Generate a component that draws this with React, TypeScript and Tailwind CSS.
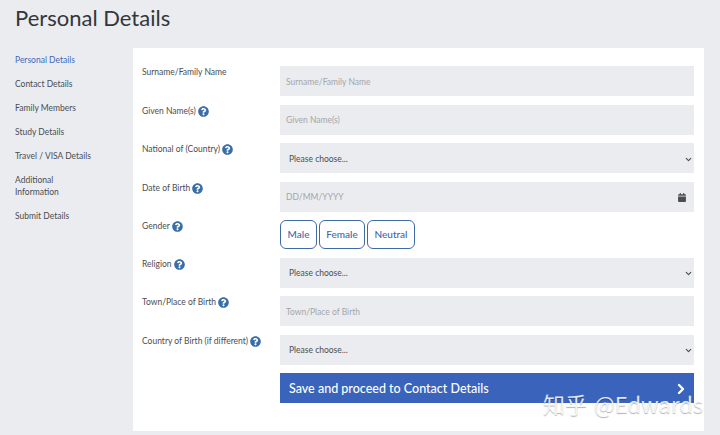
import { ChevronDown, ChevronRight } from "lucide-react";
import type { ReactNode } from "react";

const navItems = [
	"Contact Details",
	"Family Members",
	"Study Details",
	"Travel / VISA Details",
];

function Help() {
	return (
		<svg viewBox="0 0 512 512" className="ml-[2px] h-[11px] w-[11px] shrink-0" fill="#3a6ea8">
			<path d="M504 256c0 137-111 248-248 248S8 393 8 256 119 8 256 8s248 111 248 248zM262.700 90c-54.500 0-89.300 23-116.500 63.800-3.500 5.300-2.300 12.400 2.800 16.300l34.700 26.300c5.200 3.900 12.600 3 16.700-2.100 17.900-22.700 30.100-35.800 57.300-35.800 20.400 0 45.700 13.100 45.700 32.900 0 14.900-12.300 22.600-32.400 33.900-23.400 13.100-54.400 29.500-54.400 70.300V300c0 6.600 5.400 12 12 12h56c6.600 0 12-5.400 12-12v-1.300c0-28.300 82.700-29.500 82.700-106.100C379.300 135 319.500 90 262.700 90zM256 336c-25.200 0-45.800 20.500-45.800 45.800 0 25.200 20.500 45.800 45.800 45.800s45.800-20.500 45.800-45.800c0-25.200-20.500-45.800-45.800-45.800z" />
		</svg>
	);
}

function Row({
	label,
	help = true,
	height = "h-[38.500px]",
	children,
}: {
	label: string;
	help?: boolean;
	height?: string;
	children: ReactNode;
}) {
	return (
		<div className={`flex ${height}`}>
			<div className="flex h-[13px] w-[138px] shrink-0 items-center text-[8.500px] text-[#4a4d52]">
				{label}
				{help && <Help />}
			</div>
			<div className="flex-1">{children}</div>
		</div>
	);
}

function TextInput({ placeholder, icon }: { placeholder: string; icon?: boolean }) {
	return (
		<div className="flex h-[30px] items-center justify-between bg-[#ebecef] pl-[6px] pr-[8px] pt-[2px] text-[8.500px] text-[#a3a6ab]">
			{placeholder}
			{icon && (
				<svg viewBox="0 0 448 512" className="h-[9px] w-[8px]" fill="#4a4d52">
					<path d="M0 464c0 26.500 21.500 48 48 48h352c26.500 0 48-21.500 48-48V192H0v272zM400 64h-48V16c0-8.800-7.200-16-16-16h-32c-8.800 0-16 7.200-16 16v48H160V16c0-8.800-7.200-16-16-16h-32c-8.800 0-16 7.200-16 16v48H48C21.500 64 0 85.500 0 112v48h448v-48c0-26.500-21.500-48-48-48z" />
				</svg>
			)}
		</div>
	);
}

function SelectInput() {
	return (
		<div className="flex h-[30px] items-center justify-between bg-[#ebecef] pl-[9px] pr-[1px] pt-[2px] text-[8.500px] text-[#4a4d52]">
			Please choose...
			<ChevronDown size={9} strokeWidth={3} className="text-[#4a4d52]" />
		</div>
	);
}

function GenderButton({ label, width }: { label: string; width: string }) {
	return (
		<div
			className={`flex h-[29px] ${width} items-center justify-center rounded-[6px] border-[1.500px] border-[#3f6aa8] text-[10px] font-medium text-[#3f66ad]`}
		>
			{label}
		</div>
	);
}

export default function App() {
	return (
		<div className="relative h-[435px] w-[720px] overflow-hidden bg-[#ebecf0] font-['Lato',sans-serif]">
			<h1 className="pl-[15px] pt-[3px] text-[22px] leading-[30px] text-[#33363b]">Personal Details</h1>

			<div className="mt-[15px] flex items-start">
				<nav className="flex w-[133px] shrink-0 flex-col gap-[12px] pl-[15px] pt-[6px] text-[8.500px] leading-[12px] text-[#4a4d52]">
					<a className="text-[#4169b8]">Personal Details</a>
					{navItems.map((item) => (
						<a key={item}>{item}</a>
					))}
					<a>
						Additional
						<br />
						Information
					</a>
					<a>Submit Details</a>
				</nav>

				<main className="h-[383px] w-[571px] bg-white pl-[9px] pr-[10px] pt-[18px]">
					<Row label="Surname/Family Name" help={false}>
						<TextInput placeholder="Surname/Family Name" />
					</Row>
					<Row label="Given Name(s)">
						<TextInput placeholder="Given Name(s)" />
					</Row>
					<Row label="National of (Country)">
						<SelectInput />
					</Row>
					<Row label="Date of Birth">
						<TextInput placeholder="DD/MM/YYYY" icon />
					</Row>
					<Row label="Gender" height="h-[37.500px]">
						<div className="flex gap-[2px]">
							<GenderButton label="Male" width="w-[37px]" />
							<GenderButton label="Female" width="w-[46px]" />
							<GenderButton label="Neutral" width="w-[48px]" />
						</div>
					</Row>
					<Row label="Religion">
						<SelectInput />
					</Row>
					<Row label="Town/Place of Birth">
						<TextInput placeholder="Town/Place of Birth" />
					</Row>
					<Row label="Country of Birth (if different)">
						<SelectInput />
					</Row>
					<div className="flex">
						<div className="w-[138px] shrink-0" />
						<button className="flex h-[30px] flex-1 items-center justify-between bg-[#3a64bb] pl-[9px] pr-[5px] pt-[2px] text-[12.500px] font-medium text-white">
							Save and proceed to Contact Details
							<ChevronRight size={16} strokeWidth={3.5} />
						</button>
					</div>
				</main>
			</div>

			<div className="absolute left-[543px] top-[389px] font-['Noto_Sans_CJK_SC','Lato',sans-serif] text-[22px] leading-[28px] text-white/85 [text-shadow:0_1px_1px_rgba(0,0,0,0.3)]">
				知乎 <span className="ml-[2px]">@Edwards</span>
			</div>
		</div>
	);
}
